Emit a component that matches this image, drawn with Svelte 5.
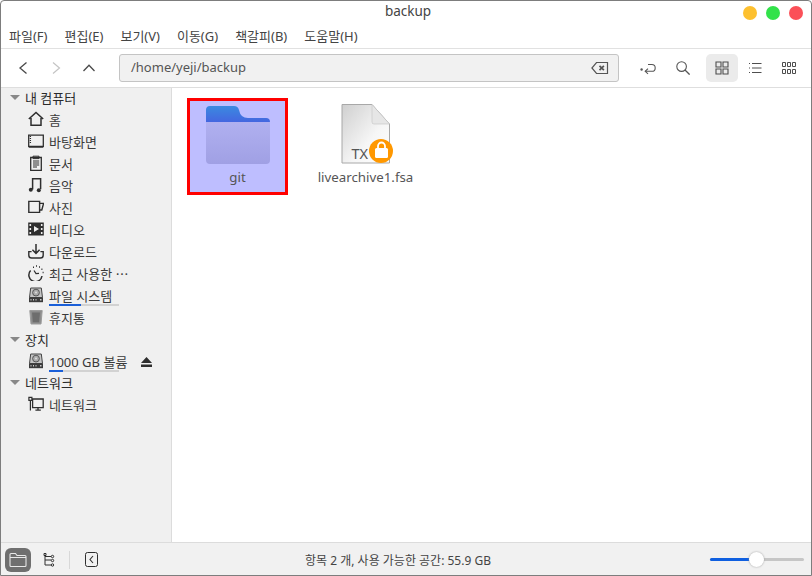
<script>
	const menus = ['파일(F)', '편집(E)', '보기(V)', '이동(G)', '책갈피(B)', '도움말(H)'];

	const places = [
		{ label: '홈', icon: 'home' },
		{ label: '바탕화면', icon: 'desktop' },
		{ label: '문서', icon: 'docs' },
		{ label: '음악', icon: 'music' },
		{ label: '사진', icon: 'photo' },
		{ label: '비디오', icon: 'video' },
		{ label: '다운로드', icon: 'download' },
		{ label: '최근 사용한 ⋯', icon: 'recent' },
		{ label: '파일 시스템', icon: 'disk', usage: 45 },
		{ label: '휴지통', icon: 'trash' }
	];
</script>

{#snippet sideIcon(name)}
	<svg class="side-icon" width="16" height="16" viewBox="0 0 16 16" fill="none" stroke="#2e2e2e" stroke-width="1.3">
		{#if name === 'home'}
			<path d="M0.8 8 8 1.400 15.200 8M3 7v7.200h10V7" stroke-width="1.500" />
		{:else if name === 'desktop'}
			<path d="M.7 2.200h14.600v11.200H.7z" />
			<path d="M.7 14h14.600" stroke-width="1.500" />
			<path d="M2.400 3v8" stroke-dasharray="1 1" />
		{:else if name === 'docs'}
			<path d="M2.700 2.500h10.600v13H2.700z" />
			<path d="M5 1.200h6v2.400H5zM5 6h6.200M5 8h6.200M5 10h6.200M5 12h4" stroke-width="1" />
		{:else if name === 'music'}
			<path d="M4.600 12.500V1.800h8v10.400" stroke-width="1.500" />
			<circle cx="2.800" cy="12.800" r="2" fill="#2e2e2e" stroke="none" />
			<circle cx="10.800" cy="13.200" r="2" fill="#2e2e2e" stroke="none" />
		{:else if name === 'photo'}
			<path d="M.8 2.400h10.800v11H.8zM11.600 4.400h4L13.800 11h-2.200" stroke-width="1.400" />
		{:else if name === 'video'}
			<path d="M.2 1.500h15.600v13H.2z" fill="#2e2e2e" stroke="none" />
			<path d="M1.500 3h1.600v2H1.500zM1.500 7h1.600v2H1.500zM1.500 11h1.600v2H1.500zM12.900 3h1.600v2h-1.600zM12.900 7h1.600v2h-1.600zM12.900 11h1.600v2h-1.600zM6 5l5 3-5 3z" fill="#eee" stroke="none" />
		{:else if name === 'download'}
			<path d="M8 1v9M4.400 6.800 8 10.400l3.600-3.600" stroke-width="1.500" />
			<path d="M3.600 8.600H.8v3.600q0 2.800 2.800 2.800h8.800q2.800 0 2.800-2.800V8.600h-2.800" stroke-width="1.400" />
		{:else if name === 'recent'}
			<path d="M2.600 5.600A6.600 6.600 0 1 0 14 11" stroke-width="1.500" />
			<path d="M6 5.500 8 8.600l3-.2" stroke-width="1.200" />
			<path d="M5 2.300h1M8 1h1M11 2h1M13.400 4.200h1M14.600 7.400h1" stroke-width="1.500" />
		{:else if name === 'disk'}
			<path d="M2.700 1h10.600l1.200 9.500H1.500z" fill="#c4c4c4" stroke="#444" stroke-width="1" />
			<circle cx="8" cy="5.600" r="3.400" fill="#aaa" stroke="#555" stroke-width="1" />
			<circle cx="8" cy="5.600" r="1" fill="#ddd" stroke="none" />
			<path d="M1 10.500h14v4.700H1z" fill="#3b3b3b" stroke="none" />
			<path d="M2.500 12.700h1M5 12.700h1M7.500 12.700h1M12 12.700h1.500" stroke="#ccc" stroke-width="1.400" />
		{:else if name === 'trash'}
			<path d="M1.800 1.500h12.400L13 15H3z" fill="#8d8d8d" stroke="#9c9c9c" stroke-width="1" />
			<path d="M4 3.400h8l-.9 9.800H4.800z" fill="#6d6d6d" stroke="none" />
		{:else if name === 'network'}
			<path d="M4.600 3h10.600v8.600H4.600zM7.400 14.200h5.400M10 11.600v2.600" stroke-width="1.300" />
			<path d="M.9 1.400h3v3h-3zM2.400 4.400v10" stroke-width="1.200" />
		{/if}
	</svg>
{/snippet}

<div class="window">
	<header class="titlebar">
		<span class="title">backup</span>
		<div class="dots">
			<span class="dot yellow"></span>
			<span class="dot green"></span>
			<span class="dot red"></span>
		</div>
	</header>

	<nav class="menubar">
		{#each menus as menu}
			<span>{menu}</span>
		{/each}
	</nav>

	<div class="toolbar">
		<div class="nav-buttons">
			<svg width="16" height="16" viewBox="0 0 16 16" fill="none" stroke="#4a4a4a" stroke-width="1.3"><path d="M11.500 2.500 5 8l6.500 5.500" /></svg>
			<svg width="16" height="16" viewBox="0 0 16 16" fill="none" stroke="#c4c4c4" stroke-width="1.200"><path d="M5 2.500 11.500 8 5 13.500" /></svg>
			<svg width="16" height="16" viewBox="0 0 16 16" fill="none" stroke="#4a4a4a" stroke-width="1.300"><path d="M2.500 11 8 5.200 13.500 11" /></svg>
		</div>
		<div class="pathbar">
			<span class="path-text">/home/yeji/backup</span>
			<svg width="18" height="14" viewBox="0 0 18 14" fill="none" stroke="#555" stroke-width="1.200">
				<path d="M5.500 1.500h11v11h-11L.9 7z" />
				<path d="M8.500 4.800l4.400 4.400M12.900 4.800 8.500 9.200" stroke-width="1.700" />
			</svg>
		</div>
		<div class="actions">
			<svg width="16" height="16" viewBox="0 0 16 16" fill="none" stroke="#555" stroke-width="1.100">
				<circle cx="1.600" cy="9.500" r="1.200" fill="#555" stroke="none" />
				<path d="M8 4.500h3.800a3.400 3.400 0 0 1 0 6.800H5.500" />
				<path d="M8 8.700 5.200 11.300 8 13.900" />
			</svg>
			<svg width="14" height="14" viewBox="0 0 14 14" fill="none" stroke="#555" stroke-width="1.100">
				<circle cx="5.600" cy="5.600" r="4.800" />
				<path d="m9 9 4.600 4.600" stroke-width="1.300" />
			</svg>
			<div class="view-toggle active">
				<svg width="14" height="14" viewBox="0 0 14 14" fill="none" stroke="#4e4e4e" stroke-width="1.100">
					<path d="M1 1h5v5H1zM8 1h5v5H8zM1 8h5v5H1zM8 8h5v5H8z" />
				</svg>
			</div>
			<div class="view-toggle list-toggle">
				<svg width="14" height="14" viewBox="0 0 14 14" fill="none" stroke="#4e4e4e" stroke-width="1">
					<path d="M1 2.500h1M4 2.500h9.500M1 7h1M4 7h9.500M1 11.500h1M4 11.500h9.500" />
				</svg>
			</div>
			<div class="view-toggle grid-toggle">
				<svg width="14" height="14" viewBox="0 0 14 14" fill="none" stroke="#4e4e4e" stroke-width="1">
					<path d="M.5 1.500h3v4h-3zM5.500 1.500h3v4h-3zM10.500 1.500h3v4h-3zM.5 8.500h3v4h-3zM5.500 8.500h3v4h-3zM10.500 8.500h3v4h-3z" />
				</svg>
			</div>
		</div>
	</div>

	<div class="main">
		<aside class="sidebar">
			<div class="section"><span class="arrow"></span>내 컴퓨터</div>
			{#each places as place}
				<div class="item">
					{@render sideIcon(place.icon)}
					<span class="item-label">
						{place.label}
						{#if place.usage}
							<span class="usage"><span class="usage-fill" style="width: {place.usage}%"></span></span>
						{/if}
					</span>
				</div>
			{/each}
			<div class="section"><span class="arrow"></span>장치</div>
			<div class="item">
				{@render sideIcon('disk')}
				<span class="item-label">
					1000 GB 볼륨
					<span class="usage"><span class="usage-fill" style="width: 20%"></span></span>
				</span>
				<svg class="eject" width="11" height="10" viewBox="0 0 11 10" fill="#2e2e2e"><path d="M5.500 0 11 6H0zM0 7.500h11V10H0z" /></svg>
			</div>
			<div class="section network"><span class="arrow"></span>네트워크</div>
			<div class="item network">
				{@render sideIcon('network')}
				<span class="item-label">네트워크</span>
			</div>
		</aside>

		<main class="files">
			<div class="file selected">
				<svg class="folder" width="66" height="60" viewBox="0 0 66 60">
					<defs>
						<linearGradient id="tab" x1="0" y1="0" x2="0" y2="1">
							<stop offset="0" stop-color="#3b8ae0" />
							<stop offset="1" stop-color="#4a50e0" />
						</linearGradient>
						<linearGradient id="front" x1="0" y1="0" x2="0" y2="1">
							<stop offset="0" stop-color="#b0b0f0" />
							<stop offset="1" stop-color="#a0a0e4" />
						</linearGradient>
					</defs>
					<path d="M1 24V5q0-4 4-4h24q4 0 5 4 1.500 8 9 8h18q4 0 4 4v10H1z" fill="url(#tab)" />
					<path d="M1 17h64v38q0 4-4 4H5q-4 0-4-4z" fill="url(#front)" />
				</svg>
				<span>git</span>
			</div>
			<div class="file doc">
				<div class="doc-icon">
					<svg width="50" height="60" viewBox="0 0 50 60">
						<defs>
							<linearGradient id="paper" x1="0" y1="0" x2="1" y2="1">
								<stop offset="0" stop-color="#cfcfcf" />
								<stop offset="0.6" stop-color="#f6f6f6" />
								<stop offset="1" stop-color="#fff" />
							</linearGradient>
						</defs>
						<path d="M1 .5h30L48.500 20v39H1z" fill="url(#paper)" stroke="#a8a8a8" />
						<path d="M31 .5 48.500 20H33q-2 0-2-2z" fill="#e6e6e6" stroke="#c4c4c4" stroke-width=".6" />
					</svg>
					<span class="tx">TX</span>
					<svg class="lock" width="24" height="24" viewBox="0 0 24 24">
						<circle cx="12" cy="12" r="12" fill="#ff9800" />
						<path d="M9 9V7a3.500 3.500 0 0 1 7 0v2" fill="none" stroke="#fff" stroke-width="1.800" />
						<rect x="6" y="9" width="13" height="10" rx="1.500" fill="#fff" />
					</svg>
				</div>
				<span>livearchive1.fsa</span>
			</div>
		</main>
	</div>

	<footer class="statusbar">
		<div class="status-left">
			<div class="places-toggle">
				<svg width="18" height="16" viewBox="0 0 18 16" fill="none" stroke="#e8e8e8" stroke-width="1.100">
					<path d="M1 13.500V2.500q0-1 1-1h4.500l1.500 2h8q1 0 1 1v9q0 1-1 1H2q-1 0-1-1zM1 5.500h16" />
				</svg>
			</div>
			<svg class="tree" width="12" height="14" viewBox="0 0 12 14" fill="none" stroke="#2e2e2e" stroke-width="1">
				<path d="M1 .5h2v2H1zM2 2.500V12h6M2 7h6M2 3.500h6" />
				<circle cx="9.500" cy="3.500" r="1.200" />
				<circle cx="9.500" cy="7.500" r="1.200" />
				<circle cx="9.500" cy="12" r="1.200" />
			</svg>
			<span class="divider"></span>
			<svg width="13" height="15" viewBox="0 0 13 15" fill="none" stroke="#2e2e2e" stroke-width="1">
				<rect x=".5" y=".5" width="12" height="14" rx="2" />
				<path d="M8 4 5 7.500 8 11" stroke-width="1.100" />
			</svg>
		</div>
		<span class="status-text">항목 2 개, 사용 가능한 공간: 55.9 GB</span>
		<div class="zoom">
			<span class="track"><span class="track-fill"></span></span>
			<span class="knob"></span>
		</div>
	</footer>
</div>

<style>
	:global(body) {
		margin: 0;
		background: #fff;
	}

	.window {
		width: 812px;
		height: 576px;
		box-sizing: border-box;
		display: flex;
		flex-direction: column;
		border: 1px solid #7d7d7d;
		border-radius: 4px 4px 0 0;
		background: #fff;
		color: #3a3a3a;
		font-family: 'Noto Sans', 'Noto Sans CJK KR', sans-serif;
		font-size: 13px;
		overflow: hidden;
	}

	.titlebar {
		height: 23px;
		box-sizing: border-box;
		padding: 0 0 3px 4px;
		flex: none;
		display: flex;
		align-items: center;
		justify-content: center;
		position: relative;
	}

	.title {
		color: #444;
		font-size: 13.5px;
	}

	.dots {
		position: absolute;
		right: 8px;
		top: 5px;
		display: flex;
		gap: 9px;
	}

	.dot {
		width: 14px;
		height: 14px;
		border-radius: 50%;
	}

	.yellow { background: #fdc02f; }
	.green { background: #32e24a; }
	.red { background: #fb5058; }

	.menubar {
		height: 25px;
		box-sizing: border-box;
		padding: 0 0 2px 8px;
		flex: none;
		display: flex;
		align-items: center;
		gap: 17px;
		border-bottom: 1px solid #e1e1e1;
		color: #444;
	}

	.toolbar {
		height: 39px;
		flex: none;
		display: flex;
		align-items: center;
		border-bottom: 1px solid #dedede;
		box-sizing: border-box;
	}

	.nav-buttons {
		width: 118px;
		padding-left: 14px;
		box-sizing: border-box;
		display: flex;
		gap: 17px;
	}

	.pathbar {
		width: 500px;
		height: 28px;
		box-sizing: border-box;
		display: flex;
		align-items: center;
		justify-content: space-between;
		padding: 0 9px 0 11px;
		background: #f1f1f1;
		border: 1px solid #c4c4c4;
		border-radius: 3px;
		color: #555;
	}

	.path-text {
		margin-top: -2px;
	}

	.actions {
		display: flex;
		align-items: center;
		margin-left: 21px;
	}

	.actions > svg:nth-child(2) {
		margin: 0 16px 0 20px;
	}

	.view-toggle {
		width: 32px;
		height: 28px;
		display: flex;
		align-items: center;
		justify-content: center;
		border-radius: 5px;
	}

	.view-toggle.active {
		background: #ebebeb;
	}

	.list-toggle {
		margin-left: 1px;
	}

	.grid-toggle {
		margin-left: 2px;
	}

	.main {
		flex: 1;
		display: flex;
		min-height: 0;
	}

	.sidebar {
		width: 171px;
		flex: none;
		box-sizing: border-box;
		background: #f0f0f0;
		border-right: 1px solid #dcdcdc;
		color: #3a3a3a;
	}

	.section,
	.item {
		height: 22px;
		display: flex;
		align-items: center;
		position: relative;
		top: -2px;
	}

	.network {
		top: -3px;
	}

	.section {
		padding-left: 9px;
		color: #2a2a2a;
	}

	.arrow {
		width: 0;
		height: 0;
		margin-right: 5px;
		border-left: 5px solid transparent;
		border-right: 5px solid transparent;
		border-top: 5px solid #888;
	}

	.item {
		padding-left: 27px;
	}

	.side-icon {
		flex: none;
		margin-right: 5px;
	}

	.item-label {
		position: relative;
	}

	.usage {
		position: absolute;
		left: 0;
		top: 18px;
		width: 70px;
		height: 2px;
		background: #d2d2d2;
	}

	.usage-fill {
		display: block;
		height: 100%;
		background: #1a5fd8;
	}

	.eject {
		position: absolute;
		left: 140px;
		top: 7px;
	}

	.files {
		flex: 1;
		display: flex;
		align-items: flex-start;
		gap: 27px;
		padding: 10px 0 0 15px;
		background: #fff;
	}

	.file {
		width: 101px;
		height: 97px;
		box-sizing: border-box;
		display: flex;
		flex-direction: column;
		align-items: center;
		color: #555;
		font-size: 13.3px;
	}

	.file.selected {
		background: #bebeff;
		border: 3px solid #f00;
		padding-top: 4px;
		gap: 3px;
	}

	.folder {
		margin-left: 1px;
	}

	.file.doc {
		padding-top: 6px;
		gap: 4px;
	}

	.doc-icon {
		position: relative;
		width: 50px;
		height: 60px;
	}

	.tx {
		position: absolute;
		left: 11px;
		top: 39px;
		font-size: 14.5px;
		color: #555;
	}

	.lock {
		position: absolute;
		left: 28px;
		top: 35px;
	}

	.statusbar {
		height: 33px;
		padding-top: 1px;
		flex: none;
		display: flex;
		align-items: center;
		position: relative;
		background: #f1f1f1;
		border-top: 1px solid #dcdcdc;
		box-sizing: border-box;
	}

	.status-left {
		display: flex;
		align-items: center;
		padding-left: 4px;
	}

	.places-toggle {
		width: 26px;
		height: 24px;
		display: flex;
		align-items: center;
		justify-content: center;
		background: #6f6f6f;
		border-radius: 6px;
	}

	.tree {
		margin-left: 12px;
	}

	.divider {
		width: 1px;
		height: 18px;
		background: #d8d8d8;
		margin: 0 15px 0 14px;
	}

	.status-text {
		flex: 1;
		text-align: center;
		padding-right: 12px;
		color: #444;
		font-size: 12px;
	}

	.zoom {
		width: 94px;
		height: 16px;
		margin-right: 7px;
		position: relative;
		display: flex;
		align-items: center;
	}

	.track {
		width: 100%;
		height: 3px;
		border-radius: 2px;
		background: #c6c6c6;
	}

	.track-fill {
		display: block;
		width: 42px;
		height: 100%;
		border-radius: 2px 0 0 2px;
		background: #0f5fe0;
	}

	.knob {
		position: absolute;
		left: 39px;
		top: 0;
		width: 15px;
		height: 15px;
		border-radius: 50%;
		background: #fff;
		box-shadow: 0 0 2px #999;
	}
</style>
